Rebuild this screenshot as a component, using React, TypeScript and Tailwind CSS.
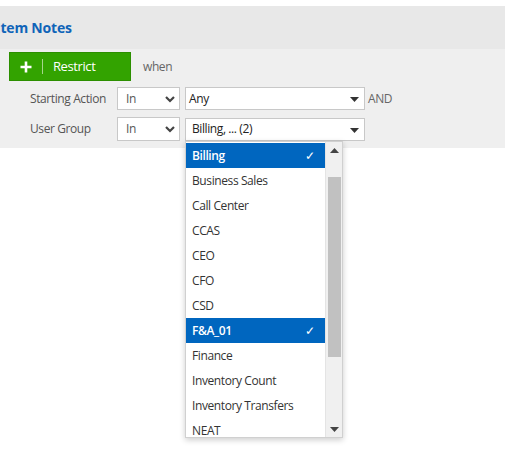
import React from "react";

const items = [
  "Billing",
  "Business Sales",
  "Call Center",
  "CCAS",
  "CEO",
  "CFO",
  "CSD",
  "F&A_01",
  "Finance",
  "Inventory Count",
  "Inventory Transfers",
  "NEAT",
];
const selected = new Set(["Billing", "F&A_01"]);

function Chevron() {
  return (
    <svg width="10" height="7" viewBox="0 0 10 7" className="absolute right-[4px] top-[8px]">
      <path d="M1 1 L5 5 L9 1" fill="none" stroke="#444" strokeWidth="2.2" />
    </svg>
  );
}

function Caret() {
  return (
    <svg width="9" height="5" viewBox="0 0 9 5" className="absolute right-[5px] top-[9px]">
      <path d="M0 0 L9 0 L4.5 5 Z" fill="#333" />
    </svg>
  );
}

export default function App() {
  return (
    <div
      className="relative w-[505px] h-[451px] bg-white overflow-hidden text-[12px] tracking-[-0.4px] text-[#333]"
      style={{ fontFamily: '"Segoe UI", "Open Sans", sans-serif' }}
    >
      <div className="h-[6px]" />
      <div className="h-[43px] bg-[#e8e8e8] flex items-center">
        <span className="ml-[-4px] text-[14px] font-bold tracking-[-0.2px] text-[#1064b8] leading-none">Item Notes</span>
      </div>
      <div className="h-[99px] bg-[#efefef]">
        <div className="pt-[3px] pl-[9px] flex items-center">
          <div className="w-[122px] h-[29px] bg-[#33a300] border border-[#2c8f00] flex items-center text-white">
            <svg width="12" height="12" viewBox="0 0 12 12" className="ml-[10px]">
              <path d="M6 0.5 V11.5 M0.5 6 H11.5" stroke="white" strokeWidth="2.6" />
            </svg>
            <span className="ml-[10px] w-px h-[15px] bg-[#a5d68c]" />
            <span className="ml-[10px] text-[13px]">Restrict</span>
          </div>
          <span className="ml-[12px] text-[#666]">when</span>
        </div>
        <div className="mt-[6px] flex items-center">
          <span className="w-[117px] pl-[30px] text-[#555]">Starting Action</span>
          <div className="relative w-[63px] h-[23px] bg-white border border-[#c8c8c8] pl-[8px] flex items-center text-[#555]">
            In
            <Chevron />
          </div>
          <div className="relative ml-[5px] w-[180px] h-[23px] bg-white border border-[#c8c8c8] pl-[3px] flex items-center text-[#222]">
            Any
            <Caret />
          </div>
          <span className="ml-[3px] text-[#666]">AND</span>
        </div>
        <div className="mt-[7px] flex items-center">
          <span className="w-[117px] pl-[30px] text-[#555]">User Group</span>
          <div className="relative w-[63px] h-[24px] bg-white border border-[#c8c8c8] pl-[8px] flex items-center text-[#555]">
            In
            <Chevron />
          </div>
          <div className="relative ml-[5px] w-[180px] h-[23px] bg-white border border-[#c8c8c8] pl-[6px] flex items-center text-[#222]">
            Billing, ... (2)
            <Caret />
          </div>
        </div>
      </div>

      <div className="absolute left-[185px] top-[141px] w-[158px] h-[297px] bg-white border border-[#d0d0d0] shadow-[0_2px_6px_rgba(0,0,0,0.2)] flex overflow-hidden">
        <div className="flex-1 pt-[1px]">
          {items.map((it) => {
            const sel = selected.has(it);
            return (
              <div
                key={it}
                className={
                  "h-[25px] flex items-center justify-between pl-[6px] pr-[10px] " +
                  (sel ? "bg-[#0066bf] text-white font-semibold" : "text-[#333]")
                }
              >
                <span>{it}</span>
                {sel && <span className="text-[12px] font-normal">✓</span>}
              </div>
            );
          })}
        </div>
        <div className="w-[17px] bg-[#f0f0f0] border-l border-[#e4e4e4] flex flex-col items-center">
          <svg width="9" height="5" viewBox="0 0 9 5" className="mt-[6px]">
            <path d="M0 5 L9 5 L4.5 0 Z" fill="#444" />
          </svg>
          <div className="mt-[24px] w-[13px] h-[180px] bg-[#c1c1c1]" />
          <svg width="9" height="5" viewBox="0 0 9 5" className="mt-[70px]">
            <path d="M0 0 L9 0 L4.5 5 Z" fill="#444" />
          </svg>
        </div>
      </div>
    </div>
  );
}
